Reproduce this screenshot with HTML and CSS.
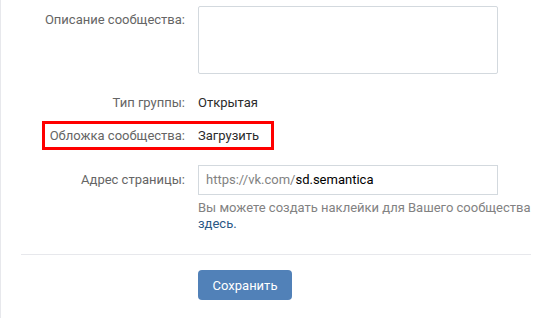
FILE: index.html
```html
<!DOCTYPE html>
<html lang="ru">
<head>
    <meta charset="UTF-8">
    <title>Настройки сообщества</title>
    <link rel="stylesheet" href="styles.css">
</head>
<body>
    <div class="page">
        <div class="form-row row-desc">
            <div class="label">Описание сообщества:</div>
            <div class="value">
                <textarea class="textarea"></textarea>
            </div>
        </div>

        <div class="form-row row-type">
            <div class="label">Тип группы:</div>
            <div class="value">Открытая</div>
        </div>

        <div class="form-row row-cover">
            <div class="label">Обложка сообщества:</div>
            <div class="value">Загрузить</div>
            <div class="highlight"></div>
        </div>

        <div class="form-row row-address">
            <div class="label">Адрес страницы:</div>
            <div class="value">
                <div class="address-input">
                    <span class="prefix">https://vk.com/</span><span class="slug">sd.semantica</span>
                </div>
            </div>
        </div>

        <div class="form-row row-help">
            <div class="label"></div>
            <div class="help">
                <div class="help-line">Вы можете создать наклейки для Вашего сообщества</div>
                <a class="link" href="#">здесь.</a>
            </div>
        </div>

        <div class="divider"></div>

        <div class="form-row row-save">
            <div class="label"></div>
            <div class="value">
                <button class="save-btn">Сохранить</button>
            </div>
        </div>
    </div>
</body>
</html>
```

FILE: styles.css
```css
body {
    margin: 0;
    background: #fff;
    font-family: Roboto, "Open Sans", Arial, sans-serif;
    font-size: 13px;
    line-height: 16px;
    color: #000;
}

.page {
    border-left: 1px solid #e7e8ec;
    min-height: 318px;
    padding-top: 6px;
    box-sizing: border-box;
}

.form-row {
    display: flex;
    align-items: flex-start;
}

.label {
    width: 184px;
    flex-shrink: 0;
    margin-right: 13px;
    text-align: right;
    color: #656565;
}

.value {
    width: 300px;
    color: #2b2b2b;
}

/* description */
.row-desc .label {
    padding-top: 6px;
}

.textarea {
    display: block;
    width: 300px;
    height: 68px;
    box-sizing: border-box;
    border: 1px solid #d3d9de;
    border-radius: 2px;
    resize: none;
    margin: 0;
    font-family: inherit;
}

.row-type {
    margin-top: 21px;
}

/* highlighted row */
.row-cover {
    position: relative;
    margin-top: 17px;
}

.highlight {
    position: absolute;
    left: 41px;
    top: -7px;
    width: 232px;
    height: 29px;
    border: 3px solid #ff0000;
    box-sizing: border-box;
}

/* address */
.row-address {
    margin-top: 21px;
    align-items: center;
}

.address-input {
    width: 300px;
    height: 30px;
    box-sizing: border-box;
    border: 1px solid #d3d9de;
    padding: 6px 7px;
    white-space: nowrap;
}

.prefix {
    color: #828282;
}

.slug {
    color: #000;
}

.row-help {
    margin-top: 5px;
}

.help {
    flex-shrink: 0;
    width: 340px;
    color: #828282;
}

.help-line {
    white-space: nowrap;
}

.link {
    color: #2a5885;
    text-decoration: none;
}

.divider {
    height: 1px;
    background: #e7e8ec;
    margin: 22px 19px 0 20px;
}

.row-save {
    margin-top: 15px;
}

.save-btn {
    width: 94px;
    height: 30px;
    border: 0;
    border-radius: 4px;
    background: #5181b8;
    color: #fff;
    font-family: inherit;
    font-size: 13px;
    padding: 0;
    cursor: pointer;
}
```
